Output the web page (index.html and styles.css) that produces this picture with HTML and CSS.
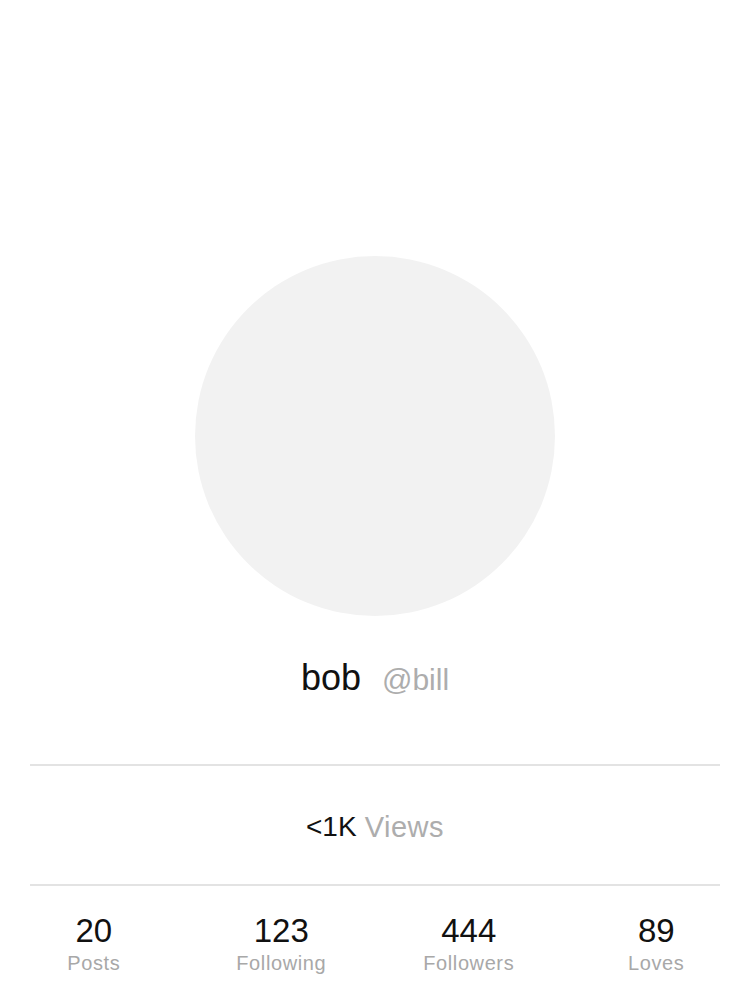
FILE: index.html
```html
<!DOCTYPE html>
<html>
<head>
<meta charset="utf-8">
<link rel="stylesheet" href="styles.css">
</head>
<body>
<div class="profile">
  <div class="avatar"></div>
  <div class="names">
    <span class="name">bob</span>
    <span class="handle">@bill</span>
  </div>
  <div class="views-row">
    <span class="views-count">&lt;1K</span>
    <span class="views-label">Views</span>
  </div>
  <div class="stats">
    <div class="stat"><div class="stat-num">20</div><div class="stat-label">Posts</div></div>
    <div class="stat"><div class="stat-num">123</div><div class="stat-label">Following</div></div>
    <div class="stat"><div class="stat-num">444</div><div class="stat-label">Followers</div></div>
    <div class="stat"><div class="stat-num">89</div><div class="stat-label">Loves</div></div>
  </div>
</div>
</body>
</html>
```
FILE: styles.css
```css
html, body {
  margin: 0;
  padding: 0;
  background: #ffffff;
}
body {
  font-family: "Liberation Sans", Arial, sans-serif;
  width: 750px;
  height: 1006px;
  overflow: hidden;
}
.profile {
  display: flex;
  flex-direction: column;
  align-items: center;
  padding-top: 256px;
}
.avatar {
  width: 360px;
  height: 360px;
  border-radius: 50%;
  background: #f2f2f2;
}
.names {
  display: flex;
  align-items: baseline;
  gap: 21px;
  margin-top: 40px;
  height: 44px;
  line-height: 44px;
}
.name {
  font-size: 36px;
  color: #111;
}
.handle {
  font-size: 30px;
  color: #adadad;
}
.views-row {
  align-self: stretch;
  margin: 64px 30px 0;
  border-top: 2px solid #e3e3e3;
  border-bottom: 2px solid #e3e3e3;
  height: 114px;
  display: flex;
  justify-content: center;
  align-items: center;
  gap: 8px;
  font-size: 28px;
  padding-top: 4px;
  box-sizing: content-box;
}
.views-count { color: #111; }
.views-label { color: #adadad; font-size: 29px; letter-spacing: 0.5px; }
.stats {
  align-self: stretch;
  display: grid;
  grid-template-columns: repeat(4, 1fr);
  padding-top: 26px;
}
.stat {
  display: flex;
  flex-direction: column;
  align-items: center;
}
.stat-num {
  font-size: 33px;
  line-height: 38px;
  color: #111;
}
.stat-label {
  font-size: 20px;
  line-height: 26px;
  color: #a8a8a8;
  letter-spacing: 0.6px;
}
```
